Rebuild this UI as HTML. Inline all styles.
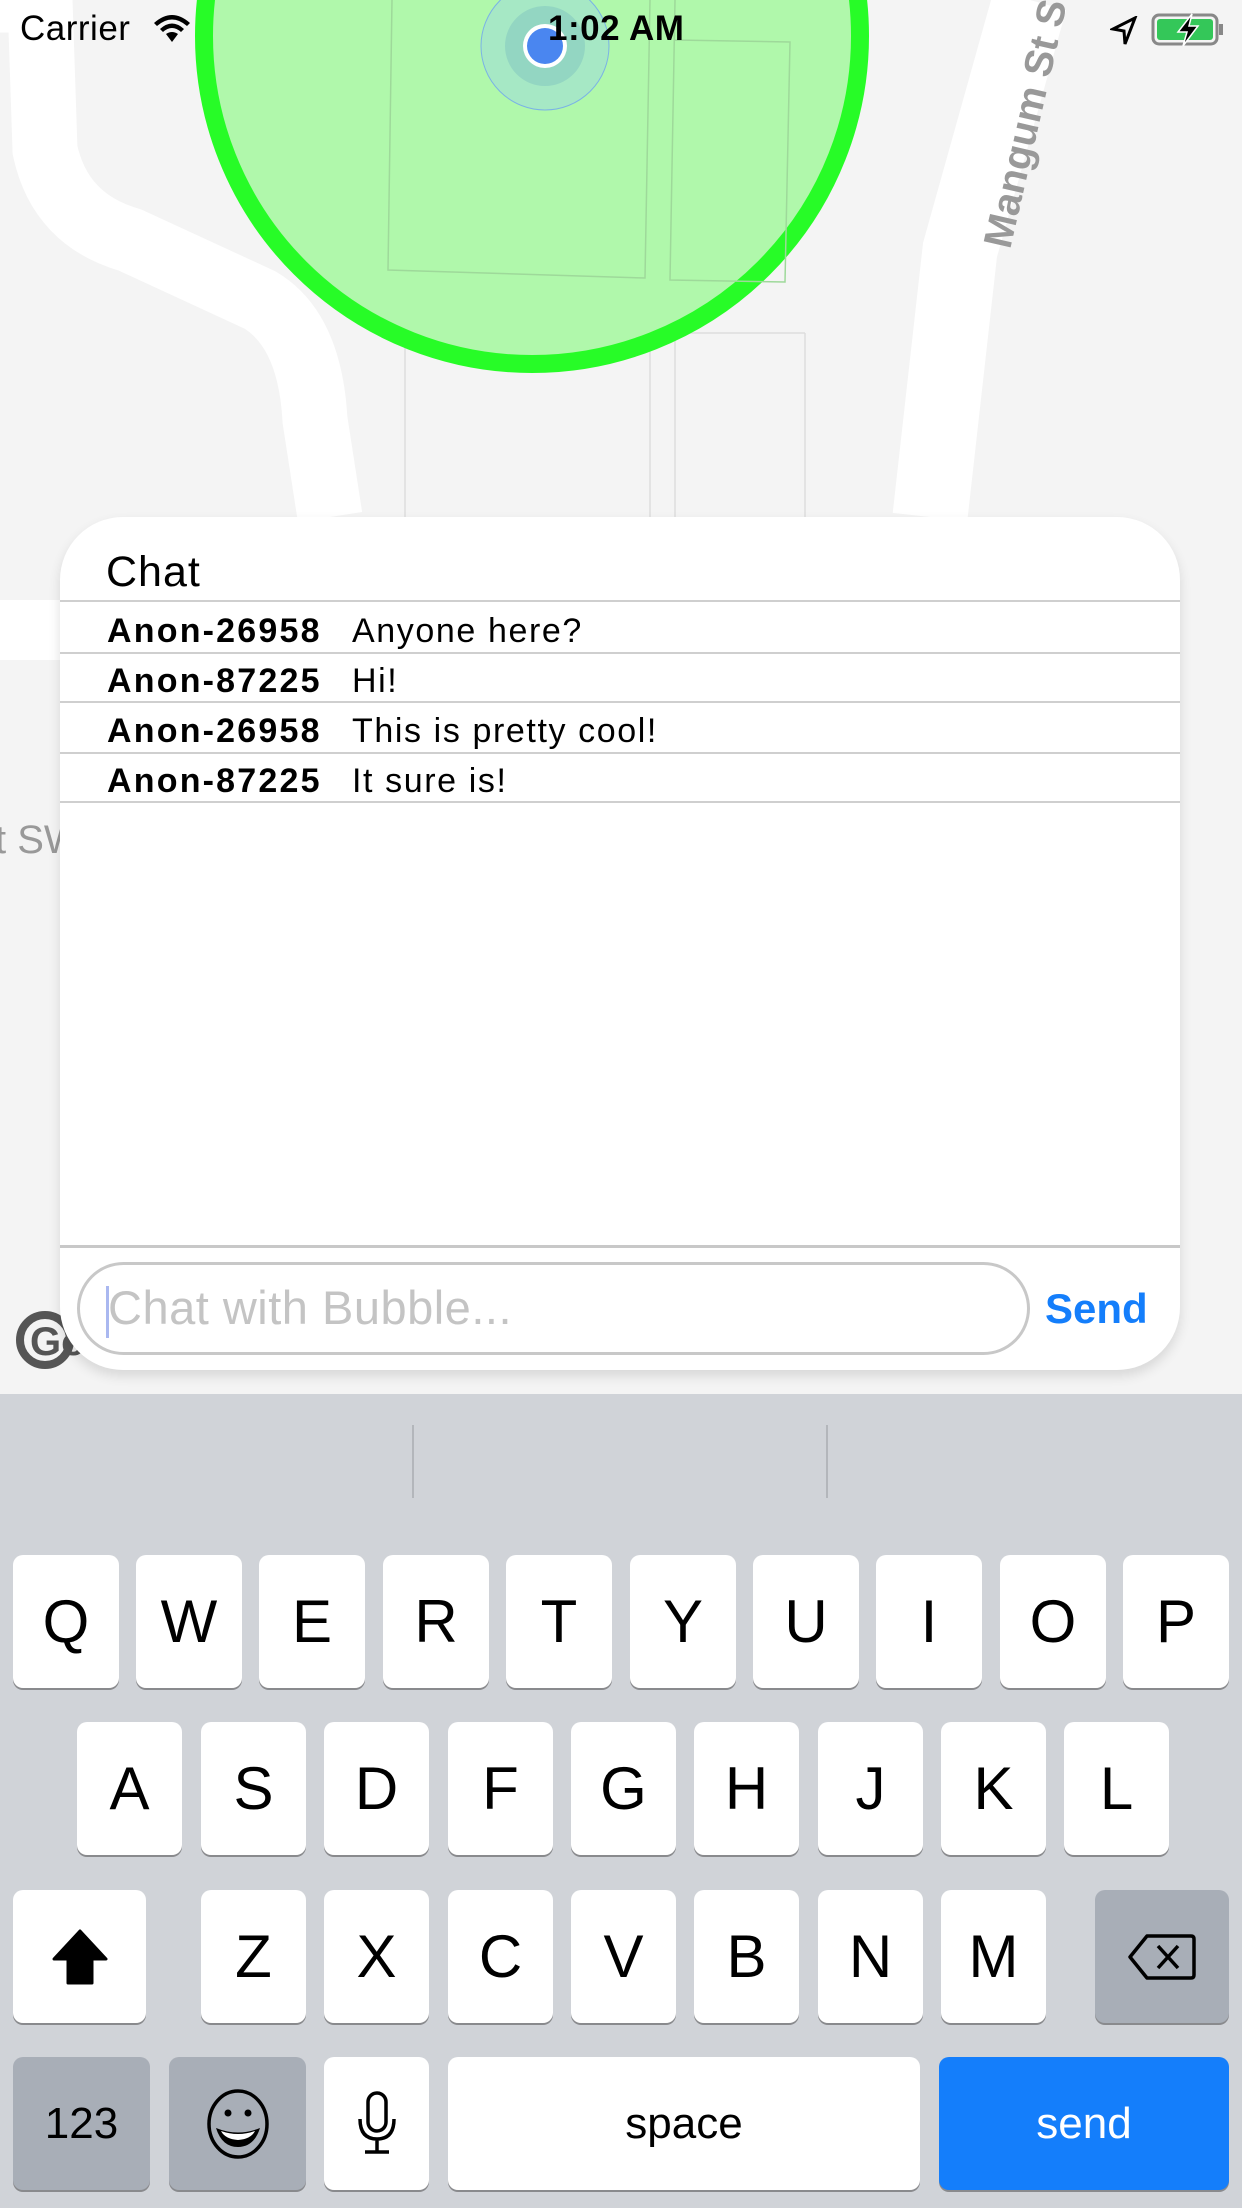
<!DOCTYPE html>
<html><head><meta charset="utf-8"><style>
*{margin:0;padding:0;box-sizing:border-box}
body{width:1242px;height:2208px;overflow:hidden;position:relative;background:#f4f4f4;font-family:"Liberation Sans",sans-serif}
.a{position:absolute}
.k{position:absolute;background:#fff;border-radius:10px;box-shadow:0 2px 0 #898a8d;font-size:60px;color:#000;display:flex;align-items:center;justify-content:center;height:133px}
.g{background:#a8aeb7}
.row{position:absolute;left:107px;font-size:34px;color:#000;height:50px;line-height:50px;letter-spacing:1.6px}
.row b{display:inline-block;width:245px;font-weight:bold;letter-spacing:2.2px}
.ln{position:absolute;left:60px;width:1120px;height:2px;background:#cfcfcf}
</style></head><body>
<!-- map -->
<svg class="a" style="left:0;top:0" width="1242" height="1394">
<path d="M0 0 L40 0 L45 150 Q60 220 130 240 L260 300 Q310 330 315 420 L330 517" stroke="#fff" stroke-width="65" fill="none"/>
<path d="M930 517 L960 250 L1030 0" stroke="#fff" stroke-width="75" fill="none"/>
<rect x="0" y="600" width="70" height="60" fill="#fff"/>
<path d="M405 333 L405 517 M650 333 L650 517 M675 333 L675 517 M805 333 L805 517 M405 333 L805 333" stroke="#ddd" stroke-width="1.5" fill="none"/>
<circle cx="532" cy="36" r="328" fill="#b0f8ab" stroke="#27fc27" stroke-width="18"/>
<path d="M392 0 L388 270 L645 278 L650 0 M675 0 L670 280 L785 282 L790 42 L675 40" stroke="#9ed99a" stroke-width="1.5" fill="none"/>
<circle cx="545" cy="46" r="64" fill="#a6e8c5" stroke="#7ab2e6" stroke-width="1"/>
<circle cx="545" cy="46" r="40" fill="#93d6c2"/>
<circle cx="545" cy="46" r="22" fill="#fff"/>
<circle cx="545" cy="46" r="18" fill="#4a86f0"/>
<text x="0" y="0" transform="translate(1010 250) rotate(-77)" font-family="Liberation Sans" font-weight="bold" font-size="40" fill="#999">Mangum St S</text>
<text x="-5" y="853" font-family="Liberation Sans" font-size="40" fill="#999">t SW</text>
<circle cx="45" cy="1340" r="25" fill="none" stroke="#555" stroke-width="8"/>
<text x="30" y="1355" font-family="Liberation Sans" font-weight="bold" font-size="40" fill="#555">Go</text>
</svg>
<!-- status bar -->
<div class="a" style="left:20px;top:9px;font-size:35px;letter-spacing:0.5px">Carrier</div>
<svg class="a" style="left:152px;top:12px" width="40" height="34"><path d="M20 30 L14 22 Q20 18 26 22Z M8 17 Q20 6 32 17 L29 20 Q20 12 11 20Z M2 11 Q20 -5 38 11 L35 14 Q20 1 5 14Z" fill="#000"/></svg>
<div class="a" style="left:548px;top:9px;font-size:35px;font-weight:bold;letter-spacing:0.5px">1:02 AM</div>
<svg class="a" style="left:1110px;top:16px" width="28" height="30"><path d="M25 2 L3 13 L14 15 L15 28Z" fill="none" stroke="#000" stroke-width="3"/></svg>
<svg class="a" style="left:1150px;top:12px" width="80" height="36"><rect x="3" y="3" width="64" height="29" rx="6" fill="none" stroke="#888" stroke-width="3"/><rect x="7" y="7" width="56" height="21" rx="3" fill="#34c759"/><rect x="69" y="12" width="4" height="11" fill="#888"/><path d="M42 2 L28 20 L37 20 L33 34 L48 14 L39 14Z" fill="#000" stroke="#fff" stroke-width="1.5"/></svg>
<!-- chat panel -->
<div class="a" style="left:60px;top:517px;width:1120px;height:853px;background:#fff;border-radius:63px;box-shadow:0 6px 12px rgba(0,0,0,0.12)"></div>
<div class="a" style="left:106px;top:548px;font-size:43px;letter-spacing:1px">Chat</div>
<div class="ln" style="top:600px"></div>
<div class="row" style="top:606px"><b>Anon-26958</b>Anyone here?</div>
<div class="ln" style="top:652px"></div>
<div class="row" style="top:656px"><b>Anon-87225</b>Hi!</div>
<div class="ln" style="top:701px"></div>
<div class="row" style="top:706px"><b>Anon-26958</b>This is pretty cool!</div>
<div class="ln" style="top:752px"></div>
<div class="row" style="top:756px"><b>Anon-87225</b>It sure is!</div>
<div class="ln" style="top:801px"></div>
<div class="ln" style="top:1245px;height:3px;background:#c8c8c8"></div>
<div class="a" style="left:77px;top:1262px;width:953px;height:93px;border:3px solid #c8c8c8;border-radius:47px"></div>
<div class="a" style="left:106px;top:1286px;width:3px;height:52px;background:#aab8f0"></div>
<div class="a" style="left:108px;top:1280px;font-size:47px;color:#c4c4c4;letter-spacing:0.5px">Chat with Bubble...</div>
<div class="a" style="left:1045px;top:1285px;font-size:42px;color:#147efb;font-weight:bold">Send</div>
<!-- keyboard -->
<div class="a" style="left:0;top:1394px;width:1242px;height:814px;background:#d0d3d8"></div>
<div class="a" style="left:412px;top:1425px;width:2px;height:73px;background:#b3b6bb"></div>
<div class="a" style="left:826px;top:1425px;width:2px;height:73px;background:#b3b6bb"></div>
<div class="k" style="left:13px;top:1555px;width:106px">Q</div>
<div class="k" style="left:136px;top:1555px;width:106px">W</div>
<div class="k" style="left:259px;top:1555px;width:106px">E</div>
<div class="k" style="left:383px;top:1555px;width:106px">R</div>
<div class="k" style="left:506px;top:1555px;width:106px">T</div>
<div class="k" style="left:630px;top:1555px;width:106px">Y</div>
<div class="k" style="left:753px;top:1555px;width:106px">U</div>
<div class="k" style="left:876px;top:1555px;width:106px">I</div>
<div class="k" style="left:1000px;top:1555px;width:106px">O</div>
<div class="k" style="left:1123px;top:1555px;width:106px">P</div>
<div class="k" style="left:77px;top:1722px;width:105px">A</div>
<div class="k" style="left:201px;top:1722px;width:105px">S</div>
<div class="k" style="left:324px;top:1722px;width:105px">D</div>
<div class="k" style="left:448px;top:1722px;width:105px">F</div>
<div class="k" style="left:571px;top:1722px;width:105px">G</div>
<div class="k" style="left:694px;top:1722px;width:105px">H</div>
<div class="k" style="left:818px;top:1722px;width:105px">J</div>
<div class="k" style="left:941px;top:1722px;width:105px">K</div>
<div class="k" style="left:1064px;top:1722px;width:105px">L</div>
<div class="k" style="left:13px;top:1890px;width:133px"><svg width="60" height="60" viewBox="0 0 60 60"><path d="M30 4 L56 32 L42 32 L42 56 L18 56 L18 32 L4 32Z" fill="#000" stroke="#000" stroke-width="3" stroke-linejoin="round"/></svg></div>
<div class="k" style="left:201px;top:1890px;width:105px">Z</div>
<div class="k" style="left:324px;top:1890px;width:105px">X</div>
<div class="k" style="left:448px;top:1890px;width:105px">C</div>
<div class="k" style="left:571px;top:1890px;width:105px">V</div>
<div class="k" style="left:694px;top:1890px;width:105px">B</div>
<div class="k" style="left:818px;top:1890px;width:105px">N</div>
<div class="k" style="left:941px;top:1890px;width:105px">M</div>
<div class="k g" style="left:1095px;top:1890px;width:134px"><svg width="70" height="50" viewBox="0 0 70 50"><path d="M20 4 L64 4 Q67 4 67 7 L67 43 Q67 46 64 46 L20 46 L3 25Z" fill="none" stroke="#000" stroke-width="3.5" stroke-linejoin="round"/><path d="M31 14 L51 36 M51 14 L31 36" stroke="#000" stroke-width="3.5"/></svg></div>
<div class="k g" style="left:13px;top:2057px;width:137px;font-size:44px">123</div>
<div class="k g" style="left:169px;top:2057px;width:137px"><svg width="64" height="70" viewBox="0 0 64 70"><ellipse cx="32" cy="35" rx="29" ry="33" fill="none" stroke="#000" stroke-width="3.5"/><circle cx="22" cy="24" r="3.5"/><circle cx="42" cy="24" r="3.5"/><path d="M10 39 Q32 48 54 39 Q48 58 32 58 Q16 58 10 39Z" fill="#000"/><path d="M15 42 Q32 48 49 42 Q45 50 32 51 Q19 50 15 42Z" fill="#fff"/></svg></div>
<div class="k" style="left:324px;top:2057px;width:105px"><svg width="40" height="66" viewBox="0 0 40 66"><rect x="11" y="2" width="18" height="38" rx="9" fill="none" stroke="#000" stroke-width="3.5"/><path d="M3 28 Q3 48 20 48 Q37 48 37 28 M20 48 L20 60 M8 61 L32 61" fill="none" stroke="#000" stroke-width="3.5"/></svg></div>
<div class="k" style="left:448px;top:2057px;width:472px;font-size:44px">space</div>
<div class="k" style="left:939px;top:2057px;width:290px;font-size:44px;background:#147efb;color:#fff">send</div>
</body></html>
